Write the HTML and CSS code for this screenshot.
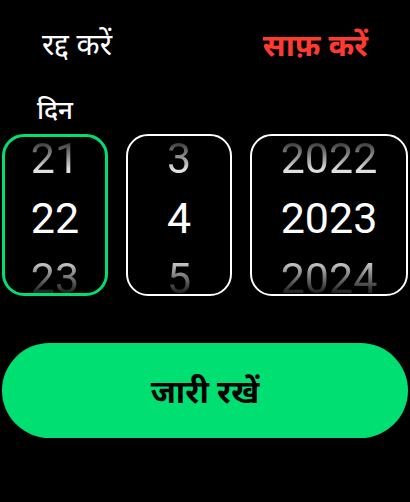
FILE: index.html
```html
<!DOCTYPE html>
<html lang="hi">
<head>
<meta charset="utf-8">
<link rel="stylesheet" href="styles.css">
</head>
<body>
<div class="screen">
  <header class="top">
    <span class="cancel">रद्द करें</span>
    <span class="clear">साफ़ करें</span>
  </header>
  <div class="label">दिन</div>
  <div class="pickers">
    <div class="wheel day active">
      <div class="num prev">21</div>
      <div class="num cur">22</div>
      <div class="num next">23</div>
    </div>
    <div class="wheel month">
      <div class="num prev">3</div>
      <div class="num cur">4</div>
      <div class="num next">5</div>
    </div>
    <div class="wheel year">
      <div class="num prev">2022</div>
      <div class="num cur">2023</div>
      <div class="num next">2024</div>
    </div>
  </div>
  <button class="continue">जारी रखें</button>
</div>
</body>
</html>
```
FILE: styles.css
```css
* { box-sizing: border-box; margin: 0; padding: 0; }
html, body { background: #000; }
body { width: 410px; height: 502px; overflow: hidden; font-family: "Noto Sans", "Noto Sans Devanagari", Roboto, sans-serif; }
.screen { padding: 0 2px; display: flex; flex-direction: column; }
.top { display: flex; justify-content: space-between; padding: 22px 40px 0 40px; height: 90px; }
.cancel { color: #fff; font-size: 30px; line-height: 44px; }
.clear { color: #ff3b30; font-size: 31px; font-weight: 700; line-height: 44px; }
.label { color: #fff; font-size: 26px; font-weight: 500; padding-left: 35px; height: 44px; line-height: 38px; }
.pickers { display: flex; gap: 18px; height: 162px; }
.wheel { border: 2px solid #fff; border-radius: 22px; height: 162px; display: flex; flex-direction: column; justify-content: center; align-items: center; overflow: hidden; padding-top: 5px; font-family: Roboto, sans-serif; }
.wheel.active { border: 3px solid #00df72; }
.day, .month { width: 106px; }
.year { width: 158px; }
.num { font-size: 43px; line-height: 60px; height: 60px; flex: none; color: #fff; }
.prev { background: linear-gradient(to bottom, #2a2a2a 20%, #e0e0e0 70%); -webkit-background-clip: text; background-clip: text; color: transparent; }
.next { background: linear-gradient(to bottom, #c8c8c8 25%, #262626 72%); -webkit-background-clip: text; background-clip: text; color: transparent; }
.continue { margin-top: 47px; height: 95px; border: none; border-radius: 48px; background: #00df72; color: #000; font-family: inherit; font-size: 32px; font-weight: 700; width: 406px; }
```
